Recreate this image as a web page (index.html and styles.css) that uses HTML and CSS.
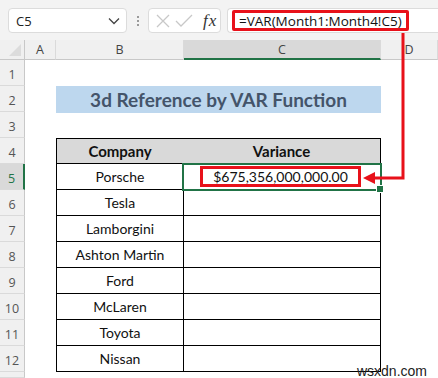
FILE: index.html
```html
<!DOCTYPE html>
<html lang="en">
  <head>
    <meta charset="UTF-8" />
    <meta name="viewport" content="width=device-width, initial-scale=1.0" />
    <link rel="stylesheet" href="styles.css">
    <title>VAR 3d Reference</title>
  </head>
  <body>
    <div class="app">
      <!-- formula bar -->
      <div class="toolbar">
        <div class="namebox">
          <span>C5</span>
          <svg width="12" height="8" viewBox="0 0 12 8"><path d="M1 1.5 L6 6.5 L11 1.5" fill="none" stroke="#444" stroke-width="1.3"/></svg>
        </div>
        <div class="grip"><i></i><i></i><i></i></div>
        <div class="fbuttons">
          <svg width="16" height="16" viewBox="0 0 16 16"><path d="M2 2 L14 14 M14 2 L2 14" stroke="#c8c8c8" stroke-width="1.3"/></svg>
          <svg width="18" height="16" viewBox="0 0 18 16"><path d="M1 8 L6 13 L17 2" fill="none" stroke="#c8c8c8" stroke-width="1.3"/></svg>
          <span class="fx">fx</span>
        </div>
        <div class="formula">
          <span class="formula-text">=VAR(Month1:Month4!C5)</span>
        </div>
      </div>

      <!-- sheet -->
      <div class="sheet">
        <div class="corner"><span></span></div>
        <div class="colhead">A</div>
        <div class="colhead">B</div>
        <div class="colhead sel">C</div>
        <div class="colhead">D</div>

        <div class="rowhead">1</div><div></div><div></div><div></div><div></div>

        <div class="rowhead">2</div><div></div>
        <div class="title">3d Reference by VAR Function</div><div></div>

        <div class="rowhead">3</div><div></div><div></div><div></div><div></div>

        <div class="rowhead">4</div><div></div>
        <div class="cell th first top">Company</div><div class="cell th top">Variance</div><div></div>

        <div class="rowhead sel">5</div><div></div>
        <div class="cell first">Porsche</div>
        <div class="cell active"><span class="value">$675,356,000,000.00</span></div><div></div>

        <div class="rowhead">6</div><div></div><div class="cell first">Tesla</div><div class="cell"></div><div></div>
        <div class="rowhead">7</div><div></div><div class="cell first">Lamborgini</div><div class="cell"></div><div></div>
        <div class="rowhead">8</div><div></div><div class="cell first">Ashton Martin</div><div class="cell"></div><div></div>
        <div class="rowhead">9</div><div></div><div class="cell first">Ford</div><div class="cell"></div><div></div>
        <div class="rowhead">10</div><div></div><div class="cell first">McLaren</div><div class="cell"></div><div></div>
        <div class="rowhead">11</div><div></div><div class="cell first">Toyota</div><div class="cell"></div><div></div>
        <div class="rowhead">12</div><div></div><div class="cell first">Nissan</div><div class="cell"></div><div></div>
        <div class="rowhead"></div><div></div><div></div><div></div><div></div>
      </div>

      <!-- callout arrow -->
      <svg class="arrow" width="438" height="378" viewBox="0 0 438 378">
        <path d="M403 33 V178 H372" fill="none" stroke="#e8111a" stroke-width="3"/>
        <polygon points="363,178 375,172 375,184" fill="#e8111a"/>
      </svg>

      <div class="watermark">wsxdn.com</div>
    </div>
  </body>
</html>
```
FILE: styles.css
```css
body {
    margin: 0;
    background: #fff;
    font-family: "Lato", "Liberation Sans", sans-serif;
}
.app {
    position: relative;
    width: 438px;
    height: 378px;
    overflow: hidden;
}

/* formula bar */
.toolbar {
    height: 40px;
    background: #f3f3f3;
    display: flex;
    align-items: flex-start;
    padding: 8px 0 0 8px;
    box-sizing: border-box;
    gap: 0;
}
.namebox {
    width: 119px;
    height: 25px;
    box-sizing: border-box;
    background: #fff;
    border: 1px solid #dcdcdc;
    border-radius: 4px;
    display: flex;
    align-items: center;
    justify-content: space-between;
    padding: 0 6px 0 7px;
    font-family: "Open Sans", sans-serif;
    font-size: 13px;
    color: #222;
}
.grip {
    width: 21px;
    height: 25px;
    display: flex;
    flex-direction: column;
    align-items: center;
    justify-content: center;
    gap: 2px;
}
.grip i {
    width: 2px;
    height: 2px;
    background: #9a9a9a;
}
.fbuttons {
    width: 73px;
    height: 25px;
    box-sizing: border-box;
    background: #fff;
    border: 1px solid #dcdcdc;
    border-radius: 4px;
    display: flex;
    align-items: center;
    padding: 0 0 0 6px;
    gap: 4px;
}
.fx {
    font-family: "Liberation Serif", serif;
    font-style: italic;
    font-size: 17px;
    color: #333;
    margin-left: 6px;
    letter-spacing: 1px;
}
.formula {
    flex: 1;
    height: 25px;
    margin-left: 6px;
    box-sizing: border-box;
    background: #fff;
    border: 1px solid #dcdcdc;
    border-right: none;
    border-radius: 4px 0 0 4px;
    display: flex;
    align-items: center;
    padding-left: 4px;
}
.formula-text {
    border: 3px solid #e8111a;
    border-radius: 2px;
    height: 21px;
    box-sizing: border-box;
    width: 177px;
    display: flex;
    align-items: center;
    padding-left: 4px;
    font-family: "Open Sans", sans-serif;
    font-size: 13.5px;
    color: #111;
}

/* sheet grid */
.sheet {
    display: grid;
    grid-template-columns: 25px 31px 128px 197px 57px;
    grid-template-rows: 20px repeat(12, 26px) 6px;
}
.corner {
    background: #f0f0f0;
    border-right: 1px solid #c8c8c8;
    border-bottom: 1px solid #c8c8c8;
    position: relative;
}
.corner span {
    position: absolute;
    right: 3px;
    bottom: 3px;
    width: 0;
    height: 0;
    border-left: 12px solid transparent;
    border-bottom: 12px solid #dcdcdc;
}
.colhead {
    background: #f0f0f0;
    border-right: 1px solid #dadada;
    border-bottom: 1px solid #c8c8c8;
    display: flex;
    align-items: center;
    justify-content: center;
    font-family: "Open Sans", sans-serif;
    font-size: 12.5px;
    color: #444;
}
.colhead.sel {
    background: #d9d9d9;
    border-bottom: 2px solid #217346;
}
.rowhead {
    background: #f0f0f0;
    border-right: 1px solid #c8c8c8;
    border-bottom: 1px solid #dadada;
    display: flex;
    align-items: center;
    justify-content: center;
    padding-top: 3px;
    box-sizing: border-box;
    font-family: "Open Sans", sans-serif;
    font-size: 12.5px;
    color: #555;
}
.rowhead.sel {
    background: #d9d9d9;
    border-right: 2px solid #217346;
    color: #217346;
}

.title {
    grid-column: span 2;
    background: #bdd7ee;
    margin-bottom: -1px;
    display: flex;
    align-items: center;
    justify-content: center;
    font-weight: bold;
    font-size: 19px;
    color: #44546a;
}

.cell {
    border-right: 1px solid #000;
    border-bottom: 1px solid #000;
    display: flex;
    align-items: center;
    justify-content: center;
    font-size: 14px;
    color: #111;
    margin-left: -1px;
}
.cell.first {
    border-left: 1px solid #000;
    margin-left: 0;
}
.cell.top {
    border-top: 1px solid #000;
}
.cell.th {
    background: #d9d9d9;
    font-weight: bold;
    font-size: 15px;
}
.cell.active {
    position: relative;
    outline: 2px solid #217346;
    outline-offset: -1px;
}
.cell.active::after {
    content: "";
    position: absolute;
    right: -4px;
    bottom: -4px;
    width: 6px;
    height: 6px;
    background: #217346;
    border: 1px solid #fff;
}
.value {
    border: 3px solid #e8111a;
    width: 161px;
    height: 21px;
    box-sizing: border-box;
    display: flex;
    align-items: center;
    justify-content: center;
    margin-left: -2px;
    font-size: 14px;
}

/* overlays */
.arrow {
    position: absolute;
    left: 0;
    top: 0;
    pointer-events: none;
}
.watermark {
    position: absolute;
    right: 11px;
    bottom: 0;
    line-height: 14px;
    font-family: "Liberation Sans", sans-serif;
    font-size: 14px;
    color: #222;
}
```
